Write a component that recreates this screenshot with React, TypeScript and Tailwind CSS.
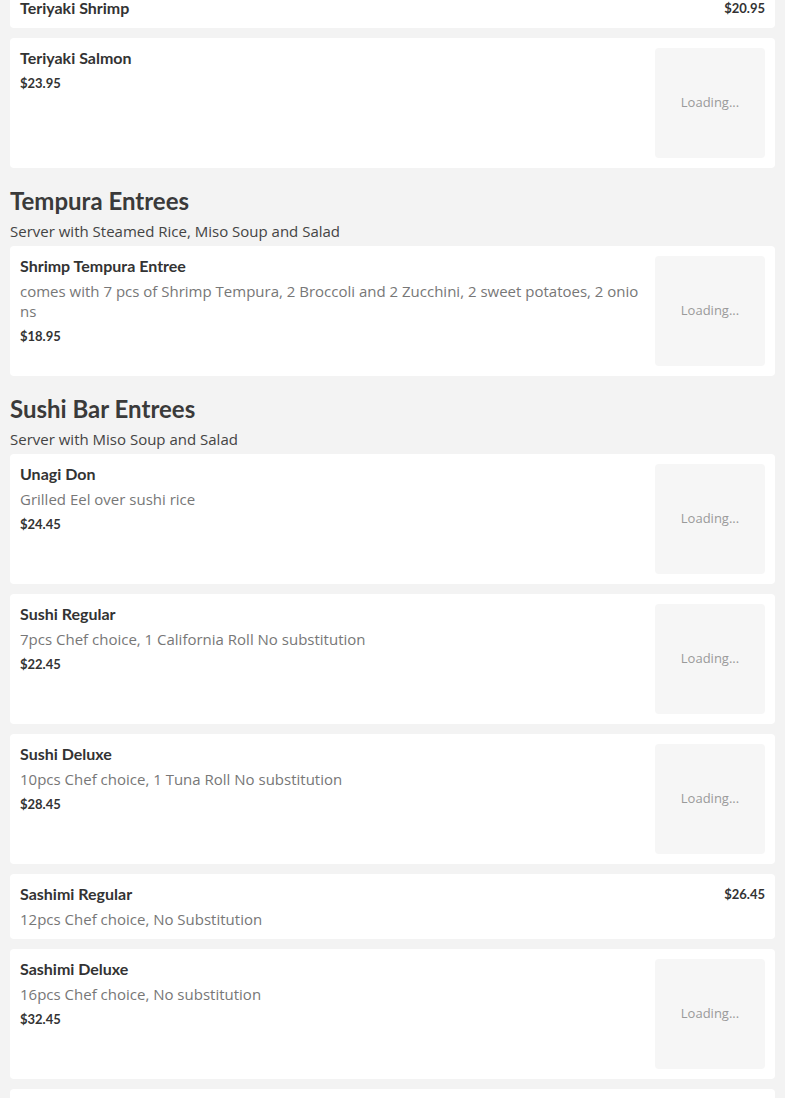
import React from "react";

type Item = { name: string; desc?: string; price: string; image?: boolean };

const TITLE = "font-['Lato','Noto_Sans',sans-serif]";
const BODY = "font-['Open_Sans','Noto_Sans',sans-serif]";

function Card({ item }: { item: Item }) {
  if (!item.image) {
    return (
      <div className="bg-white rounded-[4px] p-[10px] flex gap-[10px]">
        <div className="flex-1 min-w-0 flex flex-col gap-[5px]">
          <div className={`${TITLE} text-[16px] leading-[20px] font-bold text-[#333]`}>{item.name}</div>
          {item.desc && (
            <div className={`${BODY} text-[15px] leading-[20px] text-[#777] break-all`}>{item.desc}</div>
          )}
        </div>
        <div className={`${TITLE} text-[13px] leading-[20px] font-bold text-[#333] shrink-0`}>{item.price}</div>
      </div>
    );
  }
  return (
    <div className="bg-white rounded-[4px] p-[10px] flex gap-[10px]">
      <div className="flex-1 min-w-0 flex flex-col gap-[5px]">
        <div className={`${TITLE} text-[16px] leading-[20px] font-bold text-[#333]`}>{item.name}</div>
        {item.desc && (
          <div className={`${BODY} text-[15px] leading-[20px] text-[#777] break-all`}>{item.desc}</div>
        )}
        <div className={`${TITLE} text-[13px] leading-[20px] font-bold text-[#333]`}>{item.price}</div>
      </div>
      <div className="w-[110px] h-[110px] shrink-0 rounded-[4px] bg-[#f6f6f6] flex items-center justify-center">
        <span className={`${BODY} text-[13px] text-[#9a9a9a]`}>Loading...</span>
      </div>
    </div>
  );
}

function Section({ title, desc, items }: { title: string; desc: string; items: Item[] }) {
  return (
    <div className="flex flex-col">
      <div className="pt-[8px] pb-[5px]">
        <h2 className={`${TITLE} text-[24px] leading-[30px] font-bold text-[#3a3a3a]`}>{title}</h2>
        <div className={`${BODY} text-[15px] leading-[20px] mt-[5px] text-[#444]`}>{desc}</div>
      </div>
      <div className="flex flex-col gap-[10px]">
        {items.map((it) => (
          <Card key={it.name} item={it} />
        ))}
      </div>
    </div>
  );
}

export default function App() {
  return (
    <div className="bg-[#f3f3f3] h-[1098px] overflow-hidden">
      <div className="px-[10px] mt-[-12px] flex flex-col gap-[10px]">
        <Card item={{ name: "Teriyaki Shrimp", price: "$20.95" }} />
        <Card item={{ name: "Teriyaki Salmon", price: "$23.95", image: true }} />
        <Section
          title="Tempura Entrees"
          desc="Server with Steamed Rice, Miso Soup and Salad"
          items={[
            {
              name: "Shrimp Tempura Entree",
              desc: "comes with 7 pcs of Shrimp Tempura, 2 Broccoli and 2 Zucchini, 2 sweet potatoes, 2 onions",
              price: "$18.95",
              image: true,
            },
          ]}
        />
        <Section
          title="Sushi Bar Entrees"
          desc="Server with Miso Soup and Salad"
          items={[
            { name: "Unagi Don", desc: "Grilled Eel over sushi rice", price: "$24.45", image: true },
            { name: "Sushi Regular", desc: "7pcs Chef choice, 1 California Roll No substitution", price: "$22.45", image: true },
            { name: "Sushi Deluxe", desc: "10pcs Chef choice, 1 Tuna Roll No substitution", price: "$28.45", image: true },
            { name: "Sashimi Regular", desc: "12pcs Chef choice, No Substitution", price: "$26.45" },
            { name: "Sashimi Deluxe", desc: "16pcs Chef choice, No substitution", price: "$32.45", image: true },
          ]}
        />
        <div className="bg-white rounded-[4px] h-[40px]" />
      </div>
    </div>
  );
}
